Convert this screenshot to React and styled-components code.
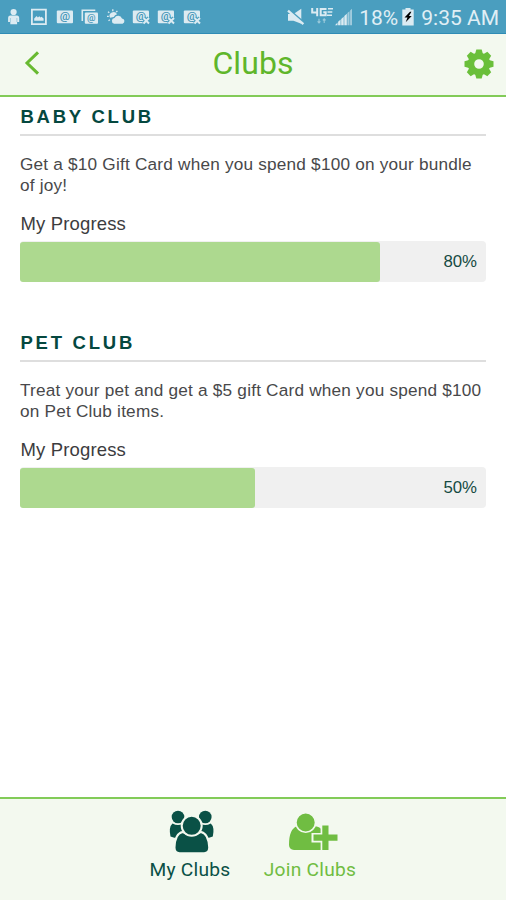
import React from "react";
import styled, { createGlobalStyle } from "styled-components";

const clubs = [
  {
    name: "BABY CLUB",
    lines: [
      "Get a $10 Gift Card when you spend $100 on your bundle",
      "of joy!",
    ],
    progress: 80,
    fill: 360,
  },
  {
    name: "PET CLUB",
    lines: [
      "Treat your pet and get a $5 gift Card when you spend $100",
      "on Pet Club items.",
    ],
    progress: 50,
    fill: 235,
  },
];

function At({ x, y, size }) {
  return (
    <text
      x={x}
      y={y}
      fontSize={size}
      fontFamily="Roboto, sans-serif"
      fontWeight="500"
      textAnchor="middle"
      fill="#3f93b5"
    >
      @
    </text>
  );
}

function MailIcon({ failed }) {
  return (
    <StatusSvg viewBox="0 0 18 18">
      <rect x="0.8" y="2.4" width="16.2" height="12.8" rx="1" />
      <At x={8.8} y={12.2} size={11.5} />
      {failed && (
        <>
          <path
            d="M11.5 10l5.5 5.5M17 10l-5.5 5.5"
            stroke="#4a9ebf"
            strokeWidth="4.2"
          />
          <path
            d="M11.5 10l5.5 5.5M17 10l-5.5 5.5"
            stroke="#dcebf2"
            strokeWidth="2"
          />
        </>
      )}
    </StatusSvg>
  );
}

function StatusBar() {
  return (
    <Status>
      <Notifications>
        <StatusSvg viewBox="0 0 18 18">
          <circle cx="8.6" cy="4" r="3.1" />
          <path d="M5 7.4h7.2q2 .3 2 2.3v4.3h-2.1v2.2H5.3V14H3.1V9.7q0-2 1.9-2.3z" />
          <path d="M5.4 10v4M11.9 10v4" stroke="#75b5ce" strokeWidth=".6" />
        </StatusSvg>
        <StatusSvg viewBox="0 0 18 18">
          <path
            fillRule="evenodd"
            d="M1 .8h15.8V17H1zM2.8 2.6v12.6H15V2.6z"
          />
          <path d="M4.2 12.7v-2.2l2.4-2.6 1.3 1.6 1.4-1.3 1.2 1.4 1-.9 2.1 1.8v2.2z" />
        </StatusSvg>
        <MailIcon />
        <StatusSvg viewBox="0 0 18 18">
          <path
            d="M1.3 13V2.2h13"
            fill="none"
            stroke="#dcebf2"
            strokeWidth="1.6"
          />
          <rect x="3.8" y="4.5" width="13.2" height="11.2" rx="1" />
          <At x={10.3} y={13} size={9.5} />
        </StatusSvg>
        <StatusSvg viewBox="0 0 18 18">
          <path
            d="M1 3.8l1.3 1M5.8 1.2v2M10.4 2.8L9.2 4.2M0 8.4h1.8M1.5 12.8l1.4-1"
            stroke="#dcebf2"
            strokeWidth="1.3"
          />
          <path d="M3 9.8A3.8 3.8 0 1 1 10 6.3a5 5 0 0 0-3.2 2.8z" />
          <path d="M7.2 15.8a3 3 0 0 1 .3-5.9 4.1 4.1 0 0 1 7.5.5 2.8 2.8 0 0 1 .6 5.4z" />
        </StatusSvg>
        <MailIcon failed />
        <MailIcon failed />
        <MailIcon failed />
      </Notifications>
      <System>
        <MuteSvg viewBox="0 0 18 18">
          <path d="M1 6h5.5l7.8-5.2v15L6.5 12.8H1z" />
          <path d="M2 1.9L17 15" stroke="#4a9ebf" strokeWidth="2.4" />
          <path d="M1 2.6l15.4 13.6" stroke="#dcebf2" strokeWidth="2.3" />
        </MuteSvg>
        <NetworkSvg viewBox="0 0 22 20">
          <path
            d="M1.2 1v4.6h6M6.2 1v8.3M15.5 2H9.7v6.3h5v-3h-2.4"
            fill="none"
            stroke="#dcebf2"
            strokeWidth="2"
          />
          <path
            d="M17 1.8h5M16.5 5h4.8M16 8.3h5"
            stroke="#dcebf2"
            strokeWidth="1.5"
          />
          <path
            d="M8 11.8v4M6.6 14.4L8 16l1.4-1.6M13.2 16v-4M11.8 13.4l1.4-1.6 1.4 1.6"
            fill="none"
            stroke="#9ccadc"
            strokeWidth="1.1"
          />
        </NetworkSvg>
        <SignalSvg viewBox="0 0 18 18">
          <path d="M0 17.2h2.5v-2.6zM3.1 17.2h2.5v-5.6l-2.5 2.2zM6.2 17.2h2.5V8.8l-2.5 2.3zM9.3 17.2h2.5V5.8L9.3 8.1z" />
          <path
            opacity=".6"
            d="M12.4 17.2h2.1v-14l-2.1 1.9zM15.1 17.2H17V.7l-1.9 1.7z"
          />
        </SignalSvg>
        <StatusText>18%</StatusText>
        <BatterySvg viewBox="0 0 12 18">
          <path d="M3.5 0h5v1.5h3.2v16H.3v-16h3.2z" />
          <path
            d="M8 3.8L2.5 9.5h3l-1.8 4.8 6-6.3H7l2.4-4.2z"
            fill="#000"
          />
        </BatterySvg>
        <StatusText>9:35 AM</StatusText>
      </System>
    </Status>
  );
}

function Club({ club }) {
  return (
    <Section>
      <ClubName>{club.name}</ClubName>
      <Offer>
        {club.lines.map((line) => (
          <div key={line}>{line}</div>
        ))}
      </Offer>
      <ProgressLabel>My Progress</ProgressLabel>
      <Track>
        <Fill style={{ width: club.fill }} />
        <Percent>{club.progress}%</Percent>
      </Track>
    </Section>
  );
}

function Gear() {
  const teeth = [0, 45, 90, 135, 180, 225, 270, 315];
  return (
    <GearSvg viewBox="-15 -15 30 30">
      {teeth.map((angle) => (
        <path
          key={angle}
          transform={`rotate(${angle})`}
          d="M-4.2-9l1.5-5.5h5.4L4.2-9z"
        />
      ))}
      <circle r="8" fill="none" stroke="#6abf3a" strokeWidth="6.4" />
    </GearSvg>
  );
}

function App() {
  return (
    <Page>
      <GlobalStyle />
      <StatusBar />
      <Header>
        <BackSvg viewBox="0 0 16 24">
          <path
            d="M14 1.3L3 12l11 10.7"
            fill="none"
            stroke="#68ba31"
            strokeWidth="3"
          />
        </BackSvg>
        <Title>Clubs</Title>
        <Gear />
      </Header>
      <Content>
        {clubs.map((club) => (
          <Club key={club.name} club={club} />
        ))}
      </Content>
      <Footer>
        <Tab $color="#0a5146" $width={80}>
          <TabSvg viewBox="0 0 50 46">
            <circle cx="13" cy="9" r="6.3" />
            <circle cx="40.3" cy="9" r="6.3" />
            <path d="M7.5 15.5q5.5 3 10 .3l5 12-6 2.2q-7 .4-11-1.5-2-9.500 2-13z" />
            <path d="M45.800 15.500q-5.500 3-10 .3l-5 12 6 2.200q7 .4 11-1.500 2-9.500-2-13z" />
            <g stroke="#f3f9ef" strokeWidth="2">
              <path d="M17.500 24q9.500 6 18.500 0 7.500 1.500 8.200 15.500 0 5.300-5 5.800H14.500q-5-.5-5-5.800.5-14 8-15.500z" />
              <circle cx="26.700" cy="17.800" r="10" />
            </g>
          </TabSvg>
          <TabLabel>My Clubs</TabLabel>
        </Tab>
        <Tab $color="#70bd42" $width={92}>
          <TabSvg viewBox="0 0 50 46">
            <path d="M12 18.300q10 6 17 0 6 .2 7.500 3.500v20.100H9q-4.800-.4-5-5 0-16 8-18.600z" />
            <circle
              cx="20.700"
              cy="14.500"
              r="9.800"
              stroke="#f3f9ef"
              strokeWidth="1.600"
            />
            <path
              d="M40.400 15.800v27M26.500 29.700h26"
              fill="none"
              stroke="#f3f9ef"
              strokeWidth="9.600"
            />
            <path
              d="M40.400 17.500v24.500M28.500 29.700h24"
              fill="none"
              stroke="#70bd42"
              strokeWidth="6.200"
            />
          </TabSvg>
          <TabLabel>Join Clubs</TabLabel>
        </Tab>
      </Footer>
    </Page>
  );
}

export default App;

const GlobalStyle = createGlobalStyle`
  * {
    box-sizing: border-box;
  }

  body {
    margin: 0;
    background: #fff;
  }
`;

const Page = styled.div`
  display: flex;
  flex-direction: column;
  width: 506px;
  height: 900px;
  overflow: hidden;
  background: #fff;
  font-family: "Liberation Sans", Arial, sans-serif;
`;

const Status = styled.div`
  display: flex;
  justify-content: space-between;
  flex: none;
  height: 34px;
  padding: 0 7px 0 5px;
  background: #4a9ebf;
  border-bottom: 1px solid #2f8cb5;
`;

const Notifications = styled.div`
  display: flex;
  align-items: center;
  gap: 7.4px;
`;

const StatusSvg = styled.svg`
  width: 18px;
  height: 18px;
  fill: #dcebf2;
  overflow: visible;
`;

const System = styled.div`
  display: flex;
  align-items: center;
  color: #e0eff5;
`;

const MuteSvg = styled(StatusSvg)`
  margin-right: 6px;
`;

const NetworkSvg = styled(StatusSvg)`
  width: 22px;
  height: 20px;
  margin-right: 2px;
`;

const SignalSvg = styled(StatusSvg)`
  margin-right: 6px;
`;

const BatterySvg = styled(StatusSvg)`
  width: 12px;
  margin: 0 7px 0 4px;
`;

const StatusText = styled.span`
  font: 400 21px/34px Roboto, sans-serif;
  white-space: nowrap;
  padding-top: 2px;
`;

const Header = styled.header`
  display: flex;
  align-items: center;
  justify-content: space-between;
  flex: none;
  height: 63px;
  padding: 0 12px 3px 24px;
  background: #f3f9ef;
  border-bottom: 2px solid #82cb58;
`;

const BackSvg = styled.svg`
  width: 16px;
  height: 24px;
  margin-right: 2px;
`;

const Title = styled.h1`
  margin: 0;
  color: #5fb62b;
  font: 400 32px/40px Roboto, sans-serif;
  letter-spacing: 0.1px;
`;

const GearSvg = styled.svg`
  width: 30px;
  height: 30px;
  margin-top: 2px;
  fill: #6abf3a;
`;

const Content = styled.main`
  flex: 1;
  padding: 0 20px;
`;

const Section = styled.section`
  height: 226px;
  padding-top: 7px;
`;

const ClubName = styled.h2`
  margin: 0;
  height: 32px;
  padding-left: 0.5px;
  border-bottom: 2px solid #dedede;
  color: #05483f;
  font-size: 18.5px;
  line-height: 26px;
  letter-spacing: 2.75px;
`;

const Offer = styled.div`
  margin-top: 18px;
  color: #48484a;
  font-size: 17.2px;
  line-height: 20.5px;
  letter-spacing: 0.21px;
  white-space: nowrap;
`;

const ProgressLabel = styled.div`
  margin-top: 17px;
  height: 29px;
  padding-left: 0.5px;
  color: #3c3c3e;
  font-size: 18.5px;
  line-height: 24px;
  letter-spacing: 0.15px;
`;

const Track = styled.div`
  display: flex;
  align-items: center;
  justify-content: space-between;
  height: 41px;
  padding-right: 9px;
  border-radius: 4px;
  background: #f0f0f0;
`;

const Fill = styled.div`
  height: 40px;
  border-radius: 3px;
  background: #add98f;
`;

const Percent = styled.span`
  color: #154a42;
  font-size: 16.8px;
`;

const Footer = styled.footer`
  display: flex;
  justify-content: center;
  gap: 34px;
  flex: none;
  height: 103px;
  padding-top: 9px;
  border-top: 2px solid #82cb58;
  background: #f3f9ef;
`;

const Tab = styled.div`
  display: flex;
  flex-direction: column;
  align-items: center;
  width: ${(props) => props.$width}px;
  color: ${(props) => props.$color};
`;

const TabSvg = styled.svg`
  width: 50px;
  height: 46px;
  fill: currentColor;
  overflow: visible;
`;

const TabLabel = styled.span`
  font: 400 19.2px/24px Roboto, sans-serif;
  letter-spacing: 0.25px;
  white-space: nowrap;
  margin-top: 4px;
`;
